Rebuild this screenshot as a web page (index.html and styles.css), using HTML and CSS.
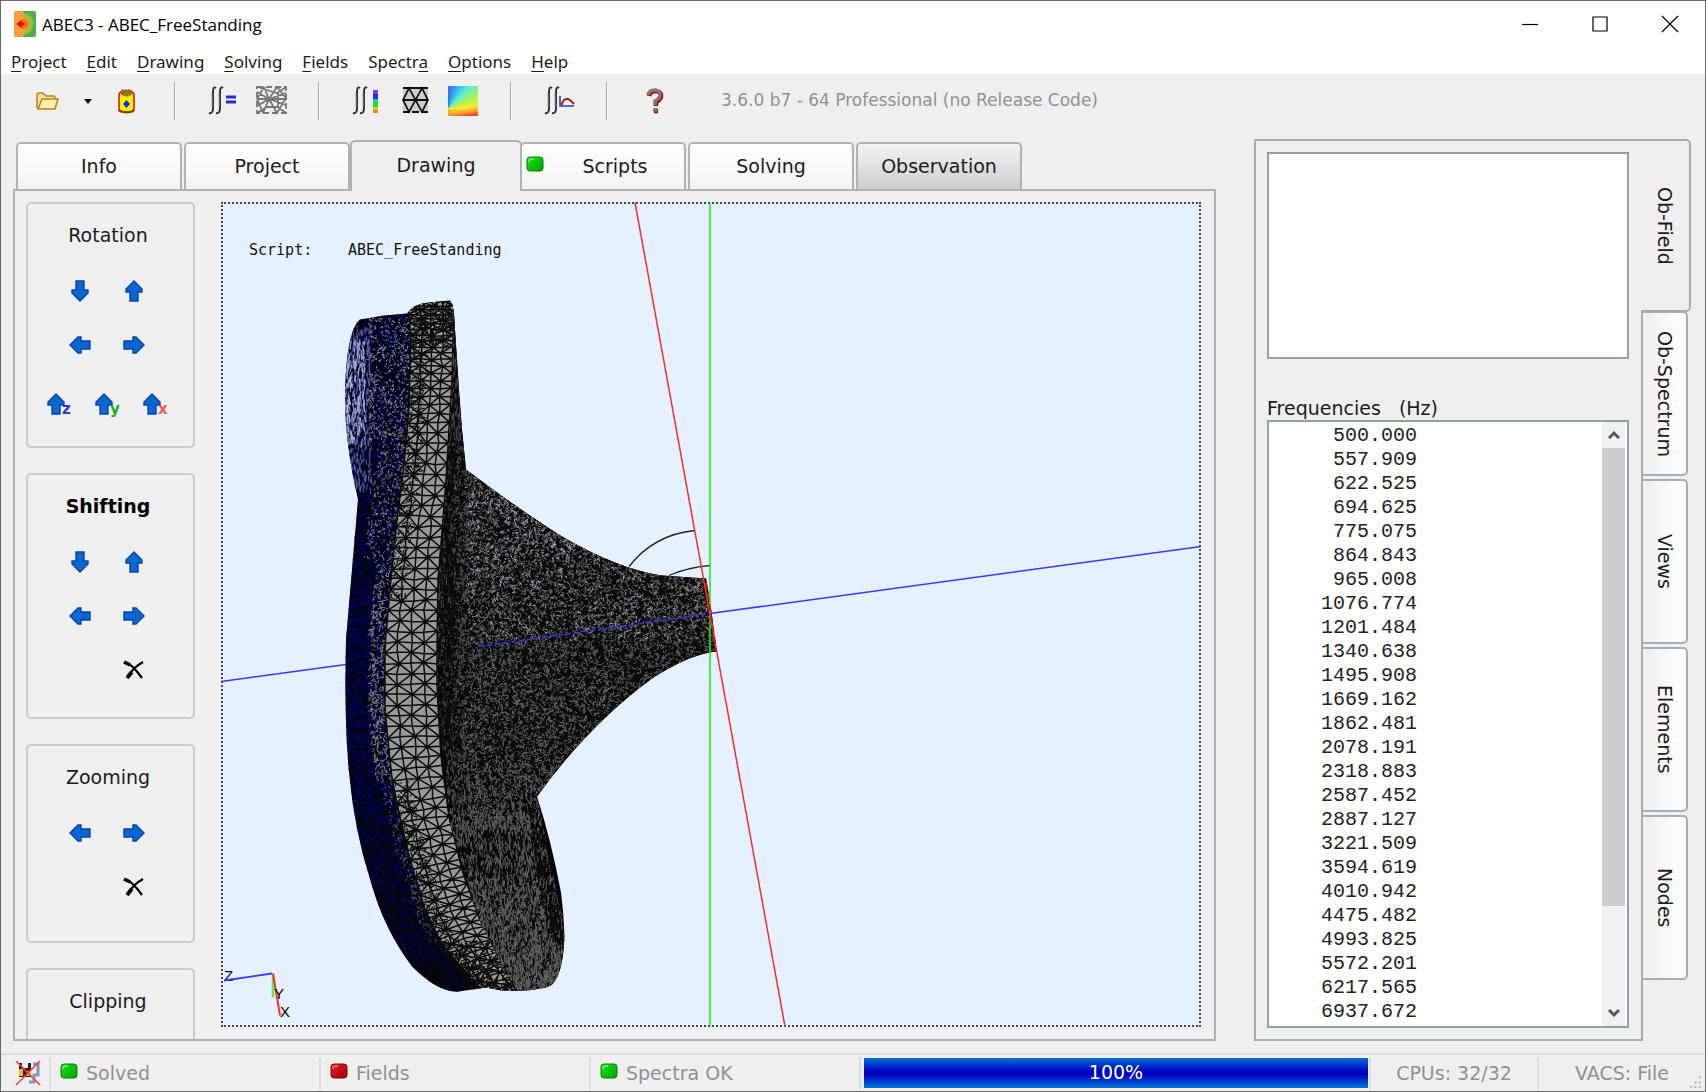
FILE: index.html
```html
<!DOCTYPE html>
<html lang="en">

<head>
    <meta charset="UTF-8">
    <meta name="viewport" content="width=device-width, initial-scale=1.0">
    <title>ABEC3 - ABEC_FreeStanding</title>
    <link rel="stylesheet" href="styles.css">
</head>

<body>
    <!-- shared symbols -->
    <svg class="defs" width="0" height="0">
        <symbol id="arrow" viewBox="0 0 22 22">
            <path d="M11 1 L19 9 V12 H15 V21 H7 V12 H3 V9 Z" fill="#0a66d0" stroke="#0646a6" stroke-width="1.4" />
        </symbol>
        <symbol id="cross" viewBox="0 0 22 22">
            <path d="M2 3 Q9 5 19 19 M20 3 Q11 8 4 18" fill="none" stroke="#000" stroke-width="2.2" />
            <path d="M1 3 L7 6 M4 19 L9 13" stroke="#000" stroke-width="3.6" />
        </symbol>
        <symbol id="integral" viewBox="0 0 16 30">
            <path d="M8 3 Q5 1 5 7 V23 Q5 29 1 28 M15 3 Q12 1 12 7 V23 Q12 29 8 28" fill="none" stroke="#333" stroke-width="2" />
            <path d="M4 8 V22 M11 8 V22" stroke="#999" stroke-width="1" />
        </symbol>
        <linearGradient id="ledGreen" x1="0" y1="0" x2="1" y2="1">
            <stop offset="0" stop-color="#18e818" /><stop offset="1" stop-color="#00a000" />
        </linearGradient>
        <linearGradient id="ledRed" x1="0" y1="0" x2="1" y2="1">
            <stop offset="0" stop-color="#f02020" /><stop offset="1" stop-color="#a00000" />
        </linearGradient>
        <symbol id="green" viewBox="0 0 18 16">
            <rect x="1" y="1" width="16" height="14" rx="3" fill="url(#ledGreen)" stroke="#0a7a0a" />
            <path d="M3 6 V4 Q3 3 4 3 H8" fill="none" stroke="#a8ffa8" />
        </symbol>
        <symbol id="red" viewBox="0 0 18 16">
            <rect x="1" y="1" width="16" height="14" rx="3" fill="url(#ledRed)" stroke="#7a0a0a" />
            <path d="M3 6 V4 Q3 3 4 3 H8" fill="none" stroke="#ffa8a8" />
        </symbol>
    </svg>

    <div class="window">
        <header class="titlebar">
            <svg class="app-icon" viewBox="0 0 22 26">
                <rect width="22" height="26" rx="2" fill="#4caf50" />
                <path d="M9 2 Q20 4 19 13 Q19 23 9 24 Z" fill="#8bc34a" />
                <path d="M9 5 Q17 7 16 13 Q16 19 9 21 Z" fill="#e8a020" />
                <rect width="10" height="26" rx="2" fill="#f5a03c" />
                <circle cx="9" cy="13" r="5" fill="#f06a20" />
                <path d="M2 13 L7 10 L11 13 L7 16 Z" fill="#e01010" />
            </svg>
            <span class="title">ABEC3 - ABEC_FreeStanding</span>
            <button class="win-btn" aria-label="Minimize"><svg viewBox="0 0 16 16"><path d="M0 8.5 H16" /></svg></button>
            <button class="win-btn" aria-label="Maximize"><svg viewBox="0 0 16 16"><path d="M1 1 H15 V15 H1 Z" /></svg></button>
            <button class="win-btn" aria-label="Close"><svg viewBox="0 0 16 16"><path d="M0 0 L16 16 M16 0 L0 16" /></svg></button>
        </header>

        <nav class="menubar">
            <button><u>P</u>roject</button>
            <button><u>E</u>dit</button>
            <button><u>D</u>rawing</button>
            <button><u>S</u>olving</button>
            <button><u>F</u>ields</button>
            <button>Spectr<u>a</u></button>
            <button><u>O</u>ptions</button>
            <button><u>H</u>elp</button>
        </nav>

        <div class="toolbar">
            <button class="tool" aria-label="Open">
                <svg viewBox="0 0 32 32">
                    <path d="M6 23 V10 Q6 8 8 8 H12 L15 11 H23 Q24 11 24 13 V15" fill="#fbe29a" stroke="#b9801c" stroke-width="1.5" />
                    <path d="M7 24 L11 14 H27 L24 24 Z" fill="#fff0a8" stroke="#b9801c" stroke-width="1.5" />
                </svg>
            </button>
            <button class="tool caret" aria-label="Recent files">
                <svg viewBox="0 0 16 32"><path d="M5 14 H13 L9 19 Z" fill="#000" /></svg>
            </button>
            <button class="tool" aria-label="Clipboard">
                <svg viewBox="0 0 32 32">
                    <rect x="8" y="7" width="15" height="20" rx="3" fill="#ffee00" stroke="#d02020" stroke-width="1.6" />
                    <path d="M11 5 H20 L22 8 Q16 14 9 8 Z" fill="#8a7a10" stroke="#d02020" stroke-dasharray="2 1" />
                    <path d="M8 25 Q16 30 23 25" fill="none" stroke="#6a4a10" stroke-width="2" />
                    <path d="M15.500 15 L19 19 L15.500 23 L12 19 Z" fill="#1030e0" />
                </svg>
            </button>
            <i class="sep"></i>
            <button class="tool" aria-label="Solve">
                <svg viewBox="0 0 32 32">
                    <use href="#integral" x="1" y="0" width="16" height="30" />
                    <path d="M19 12 H29 M19 17 H29" stroke="#2a2ad0" stroke-width="3" />
                </svg>
            </button>
            <button class="tool" aria-label="Mesh">
                <svg viewBox="0 0 32 32" fill="none" stroke="#777" stroke-width="1.8">
                    <path d="M2 2 H31 V28 H2 Z" stroke-dasharray="6 3" />
                    <path d="M2 7 L14 14 L31 8 M2 21 L14 14 L31 20 M9 2 L14 14 L8 28 M22 2 L14 14 L22 28 M22 2 L31 13 L22 28 M2 14 H31 M2 14 L9 2 M2 14 L8 28 M2 28 L12 22 H23 L31 28 M5 3 L22 8 L31 2 M23 8 V22" />
                </svg>
            </button>
            <i class="sep"></i>
            <button class="tool" aria-label="Solve fields">
                <svg viewBox="0 0 32 32">
                    <use href="#integral" x="1" y="0" width="16" height="30" />
                    <rect x="22" y="5" width="5" height="4" fill="#9040c0" />
                    <rect x="22" y="9" width="5" height="5" fill="#2030f0" />
                    <rect x="22" y="14" width="5" height="3" fill="#20c0e0" />
                    <rect x="22" y="17" width="5" height="5" fill="#20e020" />
                    <rect x="22" y="22" width="5" height="3" fill="#d0d020" />
                    <rect x="22" y="25" width="5" height="3" fill="#f08020" />
                </svg>
            </button>
            <button class="tool" aria-label="Field mesh">
                <svg viewBox="0 0 32 32">
                    <rect x="4" y="3" width="25" height="24" fill="#ccc" />
                    <path d="M4 3 H29 M4 15 H29" stroke="#111" stroke-width="2" />
                    <path d="M4 27 H29" stroke="#111" stroke-width="2" stroke-dasharray="7 2" />
                    <path d="M4 15 L10 3 L23 27 L29 15 L23 3 L10 27 Z" fill="none" stroke="#111" stroke-width="1.7" />
                </svg>
            </button>
            <button class="tool heat" aria-label="Field colours"><span></span></button>
            <i class="sep"></i>
            <button class="tool" aria-label="Solve spectra">
                <svg viewBox="0 0 32 32">
                    <use href="#integral" x="1" y="0" width="16" height="30" />
                    <path d="M17 11 V21 H31" fill="none" stroke="#2a3ac0" stroke-width="1.6" />
                    <path d="M19 20 V18 L21 15 Q24 13 27 15 L31 19" fill="none" stroke="#a01818" stroke-width="1.8" />
                </svg>
            </button>
            <i class="sep"></i>
            <button class="tool" aria-label="Help">
                <svg viewBox="0 0 32 32" fill="none" stroke-width="4.500">
                    <path d="M10 11 Q11 6 17 6 Q23 7 22 12 Q21 15 17 17 V21 M15 26 H19" stroke="#a01010" />
                    <path d="M9 10 Q10 5 16 5 Q22 6 21 11 Q20 14 16 16 V20 M14 25 H18" stroke="#857870" stroke-width="3.500" />
                </svg>
            </button>
            <span class="version">3.6.0 b7 - 64 Professional (no Release Code)</span>
        </div>

        <div class="workspace">
            <main class="main">
                <div class="tabs">
                    <button class="tab">Info</button>
                    <button class="tab">Project</button>
                    <button class="tab active">Drawing</button>
                    <button class="tab"><svg class="led tab-led"><use href="#green" /></svg>Scripts</button>
                    <button class="tab">Solving</button>
                    <button class="tab hover">Observation</button>
                </div>

                <div class="panel">
                    <div class="tools">
                        <section class="group">
                            <h2>Rotation</h2>
                            <div class="pad">
                                <button class="down" aria-label="Rotate down"><svg><use href="#arrow" /></svg></button>
                                <button aria-label="Rotate up"><svg><use href="#arrow" /></svg></button>
                                <button class="left" aria-label="Rotate left"><svg><use href="#arrow" /></svg></button>
                                <button class="right" aria-label="Rotate right"><svg><use href="#arrow" /></svg></button>
                            </div>
                            <div class="axes">
                                <button><svg><use href="#arrow" /></svg><b class="z">z</b></button>
                                <button><svg><use href="#arrow" /></svg><b class="y">y</b></button>
                                <button><svg><use href="#arrow" /></svg><b class="x">x</b></button>
                            </div>
                        </section>
                        <section class="group">
                            <h2 class="strong">Shifting</h2>
                            <div class="pad">
                                <button class="down" aria-label="Shift down"><svg><use href="#arrow" /></svg></button>
                                <button aria-label="Shift up"><svg><use href="#arrow" /></svg></button>
                                <button class="left" aria-label="Shift left"><svg><use href="#arrow" /></svg></button>
                                <button class="right" aria-label="Shift right"><svg><use href="#arrow" /></svg></button>
                                <button class="reset" aria-label="Reset shift"><svg><use href="#cross" /></svg></button>
                            </div>
                        </section>
                        <section class="group">
                            <h2>Zooming</h2>
                            <div class="pad">
                                <button class="left" aria-label="Zoom out"><svg><use href="#arrow" /></svg></button>
                                <button class="right" aria-label="Zoom in"><svg><use href="#arrow" /></svg></button>
                                <button class="reset" aria-label="Reset zoom"><svg><use href="#cross" /></svg></button>
                            </div>
                        </section>
                        <section class="group cut">
                            <h2>Clipping</h2>
                        </section>
                    </div>

                    <div class="view">
                        <svg id="scene" viewBox="224 205 976 820">
                            <defs>
                                <clipPath id="clipBody">
                                    <path d="M361 320 L385 316 L408 314 Q415 304 430 303 L451 301 Q454 304 455 315 L460 390 L463 430 L467 470 Q520 510 563 537 Q620 570 663 576 L707 579 Q713 610 717 652 Q690 655 653 679 Q590 725 538 797 Q552 840 562 893 Q566 925 565 945 Q562 985 547 988 Q525 993 503 991 L487 988 L460 992 Q440 994 413 967 Q385 930 372 883 Q355 830 350 773 Q345 720 347 640 L353 570 L359 500 Q345 440 346 390 Q348 330 361 320 Z" />
                                </clipPath>
                                <clipPath id="clipHorn">
                                    <path d="M455 301 L460 390 L467 470 L720 570 V652 L538 797 L580 1000 H520 L480 920 L450 820 L438 687 L439 580 L447 480 L453 380 Z" />
                                </clipPath>
                            </defs>
                            <path d="M222 682 L347 665" stroke="#3a3aff" stroke-width="1.500" />
                            <g clip-path="url(#clipBody)">
                                <rect x="340" y="295" width="380" height="700" fill="#050508" />
                                <g id="shell"></g>
                                <g id="band"></g>
                                <g id="horn" clip-path="url(#clipHorn)"></g>
                            </g>
                            <path d="M480 647 L711 614" stroke="#3030ff" stroke-width="1.500" stroke-dasharray="5 3" />
                            <path d="M711 614 L1202 547" stroke="#3a3aff" stroke-width="1.500" />
                            <path d="M630 567 Q655 535 696 531 M670 576 Q688 568 711 566" fill="none" stroke="#222" stroke-width="1.300" />
                            <path d="M711 203 V1027" stroke="#10f010" stroke-width="1.500" />
                            <path d="M636 203 L786 1027" stroke="#ff2a2a" stroke-width="1.500" />
                            <path d="M707 583 L717 650" stroke="#d01818" stroke-width="2" stroke-dasharray="7 4" />
                            <g class="triad">
                                <text x="225" y="981">Z</text>
                                <path d="M225 981 L273 974" stroke="#3a3aff" stroke-width="1.800" />
                                <path d="M274 974 V998" stroke="#50f050" stroke-width="2.500" />
                                <path d="M274 974 L281 1016" stroke="#ff2a2a" stroke-width="2" />
                                <text x="275" y="999">Y</text>
                                <text x="281" y="1017">X</text>
                            </g>
                            <text class="caption" x="250" y="255">Script:</text>
                            <text class="caption" x="349" y="255">ABEC_FreeStanding</text>
                        </svg>
                    </div>
                </div>
            </main>

            <aside class="side">
                <div class="side-panel">
                    <select class="listbox fields" size="8" aria-label="Observation fields"></select>
                    <label for="freq">Frequencies&nbsp;&nbsp; (Hz)</label>
                    <div class="listbox freq">
                        <select id="freq" size="25">
                            <option>500.000</option>
                            <option>557.909</option>
                            <option>622.525</option>
                            <option>694.625</option>
                            <option>775.075</option>
                            <option>864.843</option>
                            <option>965.008</option>
                            <option>1076.774</option>
                            <option>1201.484</option>
                            <option>1340.638</option>
                            <option>1495.908</option>
                            <option>1669.162</option>
                            <option>1862.481</option>
                            <option>2078.191</option>
                            <option>2318.883</option>
                            <option>2587.452</option>
                            <option>2887.127</option>
                            <option>3221.509</option>
                            <option>3594.619</option>
                            <option>4010.942</option>
                            <option>4475.482</option>
                            <option>4993.825</option>
                            <option>5572.201</option>
                            <option>6217.565</option>
                            <option>6937.672</option>
                        </select>
                        <div class="scrollbar">
                            <svg viewBox="0 0 12 8"><path d="M1 7 L6 2 L11 7" /></svg>
                            <div class="track"><div class="thumb"></div></div>
                            <svg viewBox="0 0 12 8"><path d="M1 1 L6 6 L11 1" /></svg>
                        </div>
                    </div>
                </div>
                <div class="side-tabs">
                    <button class="side-tab active">Ob-Field</button>
                    <button class="side-tab">Ob-Spectrum</button>
                    <button class="side-tab">Views</button>
                    <button class="side-tab">Elements</button>
                    <button class="side-tab">Nodes</button>
                </div>
            </aside>
        </div>

        <footer class="status">
            <div class="cell save">
                <svg viewBox="0 0 26 26">
                    <path d="M4 3 H16 V17 H4 Z" fill="#222" />
                    <path d="M7 3 H13 V8 H7 Z" fill="#eee" />
                    <path d="M4 9 H8 V16 H4 Z M12 11 H16 V16 H12 Z" fill="#e8c020" />
                    <path d="M18 4 H23 V15 H19 V22 H14" fill="none" stroke="#7a9acb" stroke-width="3" />
                    <path d="M1 1 L25 25 M25 1 L1 25" stroke="#f04040" stroke-width="1.600" />
                </svg>
            </div>
            <div class="cell wide"><svg class="led"><use href="#green" /></svg>Solved</div>
            <div class="cell wide"><svg class="led"><use href="#red" /></svg>Fields</div>
            <div class="cell wide"><svg class="led"><use href="#green" /></svg>Spectra OK</div>
            <div class="progress" role="progressbar" aria-valuenow="100">
                <div class="bar" style="width: 100%">100%</div>
            </div>
            <div class="cell info">CPUs: 32/32</div>
            <div class="cell info">VACS: File
                <svg class="grip" viewBox="0 0 12 12" fill="#b8b8b8">
                    <path d="M9 0 h2 v2 h-2z M5 5 h2 v2 h-2z M9 5 h2 v2 h-2z M1 9 h2 v2 h-2z M5 9 h2 v2 h-2z M9 9 h2 v2 h-2z" />
                </svg>
            </div>
        </footer>
    </div>

    <script src="mesh.js"></script>
</body>

</html>
```
FILE: styles.css
```css
* {
    box-sizing: border-box;
}

body {
    margin: 0;
    background: #efefef;
    color: #1c1c1c;
    font-family: "DejaVu Sans", Verdana, sans-serif;
    font-size: 19px;
}

button {
    border: 0;
    padding: 0;
    background: none;
    color: inherit;
    font: inherit;
}

svg {
    display: block;
}

.defs {
    position: absolute;
}

.window {
    display: flex;
    flex-direction: column;
    min-height: 100vh;
    border: 1px solid #6a6a6a;
}

/* title and menu */
.titlebar {
    display: flex;
    align-items: center;
    height: 46px;
    padding-left: 13px;
    background: #fff;
    font-family: "Open Sans", "Noto Sans", sans-serif;
    font-size: 17px;
    color: #000;
}

.app-icon {
    width: 22px;
    height: 26px;
    margin-right: 6px;
}

.title {
    flex: 1;
}

.win-btn {
    display: flex;
    align-items: center;
    justify-content: center;
    width: 70px;
    height: 46px;
}

.win-btn svg {
    width: 16px;
    height: 16px;
    fill: none;
    stroke: #000;
    stroke-width: 1.2;
    overflow: visible;
}

.menubar {
    display: flex;
    gap: 20px;
    height: 27px;
    padding-left: 10px;
    background: #fff;
    font-family: "Noto Sans", sans-serif;
    font-size: 17px;
    line-height: 29px;
}

.menubar u {
    text-underline-offset: 3px;
}

/* toolbar */
.toolbar {
    display: flex;
    align-items: center;
    gap: 16px;
    height: 54px;
    padding-left: 30px;
}

.tool {
    width: 32px;
    height: 32px;
}

.tool svg {
    width: 100%;
    height: 32px;
}

.tool.caret {
    width: 16px;
}

.tool.heat span {
    display: block;
    width: 30px;
    height: 30px;
    margin: 1px;
    background:
        linear-gradient(172deg, transparent 70%, #ffa030 84%, #f04020 96%),
        conic-gradient(from 0deg at 0% 75%, #3a6af0 0deg, #30b8f0 25deg, #60f0d0 45deg, #a8f060 65deg, #f8f030 90deg, #ffd020 120deg, #ffa020 180deg, #3a6af0 360deg);
}

.sep {
    width: 2px;
    height: 38px;
    margin: 0 15px;
    border-left: 1px solid #a8a8a8;
    border-right: 1px solid #fafafa;
}

.version {
    margin: 0 0 3px 34px;
    color: #919191;
    font-size: 17px;
}

/* work area */
.workspace {
    display: flex;
    flex: 1;
    gap: 38px;
    padding: 11px 14px 12px 12px;
}

.main {
    display: flex;
    flex: 1;
    flex-direction: column;
    min-width: 0;
}

.tabs {
    display: flex;
    align-items: flex-end;
    height: 50px;
    padding-left: 3px;
}

.tab {
    position: relative;
    width: 166px;
    height: 47px;
    margin-right: 2px;
    padding-bottom: 2px;
    border: 2px solid #b2b2b2;
    border-bottom: 0;
    border-radius: 5px 5px 0 0;
    background: linear-gradient(#fff, #f2f2f2);
}

.tab.active {
    z-index: 1;
    width: 172px;
    height: 51px;
    margin: 0 -2px -2px -2px;
    padding-bottom: 4px;
    background: #efefef;
}

.tab.hover {
    background: linear-gradient(#f4f4f4, #cdcdcd);
}

.led {
    width: 18px;
    height: 16px;
}

.tab:has(.led) {
    padding-left: 24px;
}

.tab-led {
    position: absolute;
    left: 4px;
    top: 12px;
}

.panel {
    display: flex;
    flex: 1;
    gap: 26px;
    padding: 11px 13px 12px 11px;
    border: 2px solid #b2b2b2;
}

.tools {
    display: flex;
    flex-direction: column;
    gap: 25px;
    width: 169px;
    margin-bottom: -12px;
}

.group {
    height: 246px;
    border: 2px solid #cbcbcb;
    border-radius: 5px;
}

.group:nth-child(3) {
    height: 199px;
}

.group.cut {
    flex: 1;
    height: auto;
    border-bottom: 0;
    border-radius: 5px 5px 0 0;
}

.group h2 {
    margin: 0;
    padding-top: 17px;
    padding-right: 5px;
    font-size: 19px;
    font-weight: normal;
    line-height: 28px;
    text-align: center;
}

.group h2.strong {
    font-weight: bold;
    color: #000;
}

.pad {
    display: grid;
    grid-template-columns: 54px 54px;
    grid-auto-rows: 54px;
    margin: 15px 0 0 25px;
    place-items: center;
}

.pad svg,
.axes svg {
    width: 22px;
    height: 22px;
}

.down svg {
    transform: rotate(180deg);
}

.left svg {
    transform: rotate(-90deg);
}

.right svg {
    transform: rotate(90deg);
}

.reset {
    grid-column: 2;
}

.axes {
    display: flex;
    gap: 20px;
    margin: 21px 0 0 17px;
}

.axes button {
    display: flex;
    width: 28px;
    height: 28px;
}

.axes svg {
    flex: none;
}

.axes b {
    margin: 7px 0 0 -5px;
    font-size: 15px;
    line-height: 18px;
}

.axes .x {
    color: #f05858;
}

.axes .y {
    color: #28a828;
}

.axes .z {
    color: #3838c8;
}

.view {
    flex: 1;
    min-width: 0;
    border: 2px dotted #3c4650;
    background: #e5f1ff;
}

#scene {
    width: 100%;
    height: 100%;
    overflow: visible;
}

.caption {
    font-family: "DejaVu Sans Mono", monospace;
    font-size: 15px;
    fill: #111;
}

.triad text {
    font-family: "Liberation Sans", sans-serif;
    font-size: 15px;
}

/* right side */
.side {
    display: flex;
    align-items: stretch;
    width: 437px;
}

.side-panel {
    display: flex;
    flex: 1;
    flex-direction: column;
    padding: 11px 12px 11px 11px;
    border: 2px solid #a9adb0;
}

.side-panel label {
    margin-top: 38px;
    line-height: 23px;
}

.listbox {
    border: 2px solid #999da5;
    border-radius: 0;
    background: #fff;
    outline: 0;
}

.fields {
    width: 100%;
    height: 207px;
}

.freq {
    display: flex;
    flex: 1;
}

.freq select {
    flex: 1;
    min-width: 0;
    padding: 2px 0 0;
    border: 0;
    outline: 0;
    overflow: hidden;
    background: #fff;
    font-family: "Liberation Mono", "Courier New", monospace;
    font-size: 20px;
}

.freq option {
    width: 148px;
    min-height: 24px;
    padding: 0;
    color: #222;
    line-height: 24px;
    text-align: right;
}

.scrollbar {
    display: flex;
    flex-direction: column;
    align-items: center;
    width: 23px;
    margin-right: 2px;
    background: #f0f0f0;
}

.scrollbar svg {
    width: 12px;
    height: 26px;
    fill: none;
    stroke: #555;
    stroke-width: 3;
}

.track {
    flex: 1;
    width: 100%;
}

.thumb {
    height: 83%;
    background: #cdcdcd;
}

.side-tabs {
    display: flex;
    flex-direction: column;
    align-items: flex-start;
    gap: 3px;
    margin-left: -2px;
}

.side-tab {
    width: 47px;
    height: 165px;
    margin-right: 3px;
    border: 2px solid #a9adb0;
    border-radius: 0 5px 5px 0;
    background: linear-gradient(to right, #f0f0f0, #fff);
    writing-mode: vertical-rl;
    text-align: center;
    line-height: 40px;
}

.side-tab.active {
    width: 50px;
    height: 173px;
    margin: 0 0 -4px;
    border-left: 0;
    background: #efefef;
}

/* status bar */
.status {
    display: flex;
    height: 38px;
    border-top: 2px solid #dcdcdc;
    color: #919191;
}

.cell {
    display: flex;
    align-items: center;
    margin: 2px 0;
    border-right: 2px solid #dcdcdc;
}

.cell .led {
    margin: 0 8px 4px 9px;
}

.save {
    width: 50px;
    padding-left: 14px;
}

.save svg {
    width: 26px;
    height: 26px;
}

.wide {
    width: 270px;
}

.progress {
    flex: 1;
    margin: 3px 1px 3px 3px;
}

.bar {
    height: 100%;
    background: linear-gradient(#0070d8, #0000c0 45%, #0000c0 55%, #0078dc);
    color: #fff;
    line-height: 29px;
    text-align: center;
}

.info {
    position: relative;
    justify-content: center;
    width: 168px;
    border-right: 0;
    border-left: 2px solid #dcdcdc;
}

.grip {
    position: absolute;
    right: 3px;
    bottom: 0;
    width: 13px;
    height: 13px;
}
```
FILE: mesh.js
```js
// small seeded generator so that the mesh is the same on every load
let seed = 7;
function rnd() {
    seed = (seed * 16807) % 2147483647;
    return seed / 2147483647;
}

// boundaries of the outer rim, [x, y] from top to bottom
const rimLeft = [[409, 300], [412, 340], [410, 407], [405, 467], [398, 520], [392, 580], [386, 647], [386, 710], [393, 777], [400, 810], [410, 853], [427, 910], [443, 943], [473, 980], [487, 992]];
const rimRight = [[455, 300], [454, 340], [453, 380], [450, 430], [447, 480], [443, 533], [439, 580], [438, 647], [438, 687], [442, 760], [450, 820], [463, 873], [480, 920], [497, 953], [520, 992]];

function edge(points, y) {
    for (let i = 1; i < points.length; i++) {
        if (y <= points[i][1]) {
            const [x0, y0] = points[i - 1];
            const [x1, y1] = points[i];
            return x0 + (x1 - x0) * (y - y0) / (y1 - y0);
        }
    }
    return points[points.length - 1][0];
}

function addPath(parent, d, color, width, fill) {
    const path = document.createElementNS('http://www.w3.org/2000/svg', 'path');
    path.setAttribute('d', d);
    path.setAttribute('stroke', color);
    path.setAttribute('stroke-width', width);
    path.setAttribute('fill', fill || 'none');
    document.getElementById(parent).appendChild(path);
}

// short random strokes, steep = 1 gives vertical ones
function speckle(n, x0, x1, y0, y1, len, steep) {
    let d = '';
    for (let i = 0; i < n; i++) {
        const y = y0 + rnd() * (y1 - y0);
        const left = typeof x0 === 'function' ? x0(y) : x0;
        const right = typeof x1 === 'function' ? x1(y) : x1;
        const x = left + rnd() * (right - left);
        const a = steep ? Math.PI / 2 + (rnd() - 0.5) * 0.5 : rnd() * Math.PI;
        const l = len * (0.5 + rnd());
        d += `M${x.toFixed(1)} ${y.toFixed(1)}l${(Math.cos(a) * l).toFixed(1)} ${(Math.sin(a) * l).toFixed(1)}`;
    }
    return d;
}

const left = y => edge(rimLeft, y);
const right = y => edge(rimRight, y);

// back shell
addPath('shell', speckle(5500, 345, left, 300, 995, 4), '#00006a', 0.8);
addPath('shell', speckle(420, 346, 372, 325, 490, 5, 1), '#5a64a8', 0.9);
addPath('shell', speckle(170, 346, 366, 340, 440, 6, 1), '#b0badf', 0.9);
addPath('shell', speckle(600, 370, left, 318, 440, 2), '#8a94a8', 0.9);
addPath('shell', speckle(420, y => left(y) - 28, left, 430, 560, 2), '#80868f', 0.9);
addPath('shell', speckle(450, y => left(y) - 16, left, 560, 780, 3), '#808080', 1);
addPath('shell', speckle(200, y => left(y) - 12, left, 780, 940, 2), '#666', 0.9);

// rim band
let fill = '';
rimLeft.forEach(p => fill += (fill ? 'L' : 'M') + p.join(' '));
rimRight.slice().reverse().forEach(p => fill += 'L' + p.join(' '));
addPath('band', fill + 'Z', 'none', 0, '#999');

const cols = 4;
let rows = [];
for (let y = 298; y < 995;) {
    const row = [];
    const w = right(y) - left(y);
    for (let i = 0; i <= cols; i++) {
        const j = i === 0 || i === cols ? 0 : (rnd() - 0.5) * 3;
        // the strip leans with the lower curve of the rim
        const lean = y > 700 ? (i - 2) * (700 - y) * 0.015 : 0;
        row.push([left(y) + w * i / cols + j, y + lean + (rnd() - 0.5) * 2]);
    }
    rows.push(row);
    y += y < 440 ? 4 + (y - 298) * 0.045 : y < 780 ? 10.5 : Math.max(6, 10.5 - (y - 780) * 0.025);
}
let mesh = '';
for (let r = 1; r < rows.length; r++) {
    for (let i = 0; i <= cols; i++) {
        const a = rows[r - 1][i];
        const b = rows[r][i];
        mesh += `M${a}L${b}`;
        if (i < cols) {
            const c = rows[r - 1][i + 1];
            const e = rows[r][i + 1];
            mesh += `M${b}L${e}`;
            mesh += (r + i) % 2 ? `M${a}L${e}` : `M${b}L${c}`;
        }
    }
}
addPath('band', mesh, '#0c0c0c', 1.5);
addPath('band', speckle(320, left, right, 298, 345, 4), '#0c0c0c', 1.1);
addPath('band', speckle(420, left, y => left(y) + 16, 340, 600, 4), '#0c0c0c', 1);
addPath('band', speckle(420, left, y => left(y) + 18, 780, 985, 4), '#0c0c0c', 1);
addPath('band', speckle(300, left, right, 940, 992, 4), '#0c0c0c', 1.1);

// horn body, the strokes get duller towards the bottom
addPath('horn', 'M430 290H730V1000H430Z', 'none', 0, '#0b0b0b');
addPath('horn', speckle(15500, 455, 720, 440, 830, 2.5), '#6a6a6a', 0.9);
addPath('horn', speckle(1300, 468, 715, 470, 640, 2.5), '#a4abb3', 0.9);
addPath('horn', speckle(700, 468, 715, 470, 560, 2.5), '#a4abb3', 0.9);
addPath('horn', speckle(1000, right, y => right(y) + 26, 300, 800, 6, 1), '#484848', 0.9);
addPath('horn', speckle(1100, right, y => right(y) + 22, 440, 860, 5), '#080808', 1.2);
addPath('horn', speckle(1000, right, 566, 760, 992, 4, 1), '#606060', 0.9);
addPath('horn', speckle(1800, right, 566, 810, 992, 4, 1), '#606060', 0.9);
addPath('horn', speckle(900, 460, 566, 880, 992, 2.5), '#6c6c6c', 0.9);
addPath('horn', speckle(450, y => 525 + (y - 797) * 0.18, 568, 790, 940, 5, 1), '#080808', 1.2);
```
